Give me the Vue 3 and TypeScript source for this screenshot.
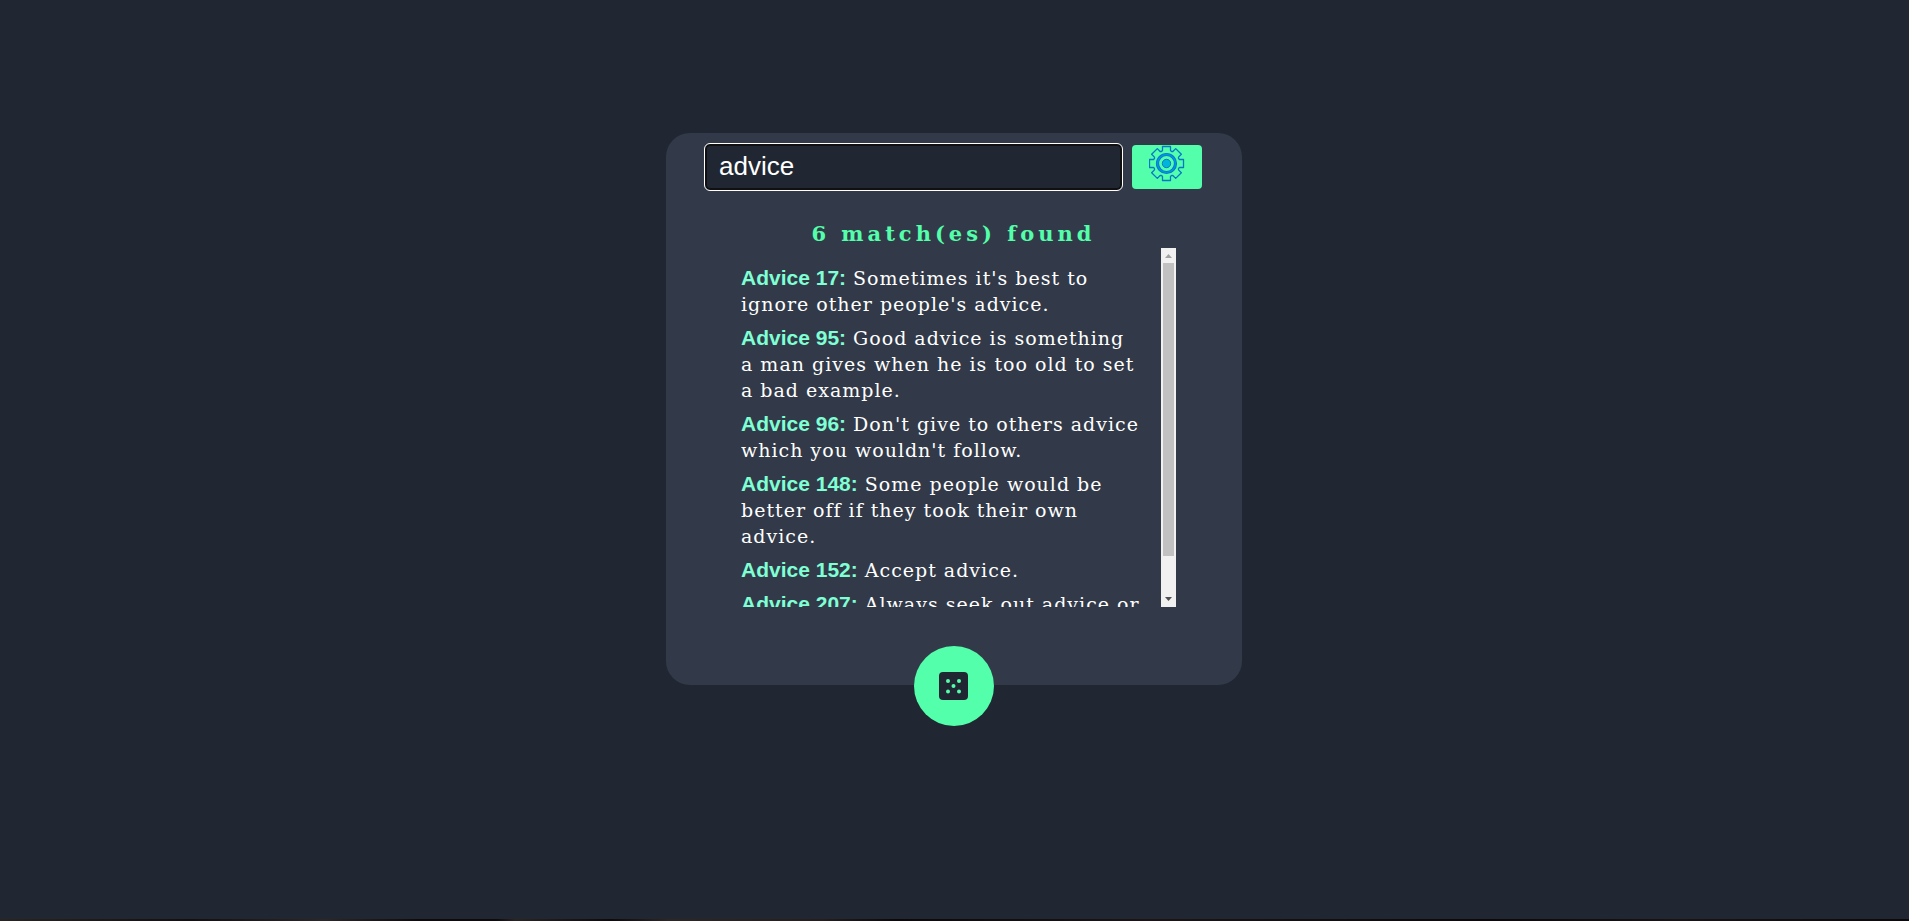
<script setup lang="ts">
import { computed, onMounted, ref } from 'vue'

interface Advice {
  id: number
  lines: string[]
}

const query = ref('advice')

const results: Advice[] = [
  { id: 17, lines: ["Sometimes it's best to", "ignore other people's advice."] },
  { id: 95, lines: ['Good advice is something', 'a man gives when he is too old to set', 'a bad example.'] },
  { id: 96, lines: ["Don't give to others advice", "which you wouldn't follow."] },
  { id: 148, lines: ['Some people would be', 'better off if they took their own', 'advice.'] },
  { id: 152, lines: ['Accept advice.'] },
  { id: 207, lines: ['Always seek out advice or', 'help when you need it.'] },
]

// Scrollbar state, kept in step with the list.
const list = ref<HTMLElement | null>(null)
const scrolled = ref(0)
const visible = ref(1)
function measure() {
  const el = list.value
  if (!el) return
  visible.value = el.clientHeight / el.scrollHeight
  scrolled.value = el.scrollTop / el.scrollHeight
}
function step(amount: number) {
  list.value?.scrollBy({ top: amount })
}
onMounted(measure)
const thumb = computed(() => ({
  height: `${visible.value * 100}%`,
  marginTop: `${Math.round(scrolled.value * 329)}px`,
}))

// Outline of an eight-toothed gear centred on the origin.
const tooth: [number, number][] = [
  [-5, -12],
  [-4, -13],
  [-4, -17],
  [4, -17],
  [4, -13],
  [5, -12],
]
const gearPoints = Array.from({ length: 8 }, (_, i) => {
  const a = (i * Math.PI) / 4
  return tooth
    .map(([x, y]) => {
      const px = x * Math.cos(a) - y * Math.sin(a)
      const py = x * Math.sin(a) + y * Math.cos(a)
      return `${px.toFixed(2)},${py.toFixed(2)}`
    })
    .join(' ')
}).join(' ')
</script>

<template>
  <div class="page">
    <main class="stage">
      <section class="card">
        <form class="search" @submit.prevent>
          <input v-model="query" class="field" type="text" aria-label="Search advice" />
          <button class="go" type="submit" aria-label="Search">
            <svg width="36" height="37" viewBox="-17.5 -18.5 36 37" fill="none" stroke="#0878c8">
              <polygon :points="gearPoints" stroke-width="1.3" stroke-linejoin="round" />
              <circle r="9" stroke-width="3.2" />
              <circle r="9" stroke="#0096e6" stroke-width="1.4" />
              <circle r="4.2" fill="#00b4dc" stroke-width="1" />
            </svg>
          </button>
        </form>
        <h1 class="title">{{ results.length }} match(es) found</h1>
        <div class="results">
          <div ref="list" class="list" tabindex="-1" @scroll="measure">
            <p v-for="item in results" :key="item.id" class="item">
              <span class="label">Advice {{ item.id }}:</span>{{ ' ' + item.lines.join('\n') }}
            </p>
          </div>
          <div class="bar">
            <button class="arrow" type="button" aria-label="Scroll up" @click="step(-40)">
              <svg width="15" height="15" viewBox="0 0 15 15"><path d="M4 10 7.5 6 11 10z" fill="#a3a3a3" /></svg>
            </button>
            <div class="track"><div class="thumb" :style="thumb"></div></div>
            <button class="arrow" type="button" aria-label="Scroll down" @click="step(40)">
              <svg width="15" height="15" viewBox="0 0 15 15"><path d="M4 5 7.5 9 11 5z" fill="#505050" /></svg>
            </button>
          </div>
        </div>
        <button class="dice" type="button" aria-label="Random advice">
          <svg width="30" height="28" viewBox="0 0 30 28">
            <rect width="29" height="28" rx="4" fill="#202733" />
            <g fill="#53ffaa">
              <circle cx="9" cy="9" r="2" />
              <circle cx="20" cy="9" r="2" />
              <circle cx="14.5" cy="14" r="2" />
              <circle cx="9" cy="19.5" r="2" />
              <circle cx="20" cy="19.5" r="2" />
            </g>
          </svg>
        </button>
      </section>
    </main>
    <div class="strip"></div>
  </div>
</template>

<style>
body {
  margin: 0;
  background: #202733;
}
</style>

<style scoped>
.page {
  display: flex;
  flex-direction: column;
  min-height: 100vh;
  background: #202733;
}
.stage {
  flex: 1;
  display: flex;
  justify-content: center;
  align-items: flex-start;
  padding: 133px 17px 32px 16px;
}
.card {
  position: relative;
  box-sizing: border-box;
  width: 100%;
  max-width: 576px;
  padding: 11px 40px 78px 39px;
  border-radius: 24px;
  background: #323a49;
}
.search {
  display: flex;
  align-items: center;
  gap: 10px;
}
.field {
  flex: 1;
  min-width: 0;
  box-sizing: border-box;
  height: 46px;
  padding: 0 12px 2px;
  border: 2px solid #101010;
  border-radius: 5px;
  outline: 1px solid #fff;
  background: #202733;
  color: #fff;
  font: 26px "Liberation Sans", Arial, sans-serif;
}
.go {
  display: flex;
  justify-content: center;
  align-items: flex-start;
  width: 70px;
  height: 44px;
  padding: 0;
  border: 0;
  border-radius: 4px;
  background: #53ffaa;
  cursor: pointer;
}
.title {
  margin: 30px 0 0;
  color: #53ffaa;
  font: bold 21px/28px "DejaVu Serif", serif;
  letter-spacing: 4px;
  text-align: center;
}
.results {
  display: flex;
  height: 359px;
  margin: 0 26px 0 36px;
}
.list {
  flex: 1;
  min-width: 0;
  box-sizing: border-box;
  padding-top: 17px;
  overflow-y: auto;
  scrollbar-width: none;
}
.item {
  margin: 0 0 8px;
  color: #fff;
  font: 19px/26px "DejaVu Serif", serif;
  letter-spacing: 1px;
  white-space: pre-line;
}
.label {
  color: #7fffd4;
  font: bold 21px/20px "Liberation Sans", Arial, sans-serif;
  letter-spacing: 0;
}
.bar {
  display: flex;
  flex-direction: column;
  width: 15px;
  background: #f1f1f1;
}
.arrow {
  display: flex;
  width: 15px;
  height: 15px;
  padding: 0;
  border: 0;
  background: none;
}
.track {
  flex: 1;
  padding: 0 2px;
  overflow: hidden;
}
.thumb {
  background: #c1c1c1;
}
.dice {
  position: absolute;
  left: 50%;
  bottom: -41px;
  display: flex;
  justify-content: center;
  align-items: center;
  width: 80px;
  height: 80px;
  padding: 0;
  border: 0;
  border-radius: 50%;
  background: #53ffaa;
  transform: translateX(-50%);
  cursor: pointer;
}
.strip {
  height: 2px;
  background: linear-gradient(90deg, #2a2420, #14100f 10%, #2c2725 17%, #0e0b0c 22%, #0e0b0c 26%, #2a2421 27%, #0e0b0c 32%, #2d2623 35%, #251e1c 43%, #0c090b 47%, #1c1514 60%, #0c090b 78%, #1a1413 88%, #0c090b);
}
</style>
